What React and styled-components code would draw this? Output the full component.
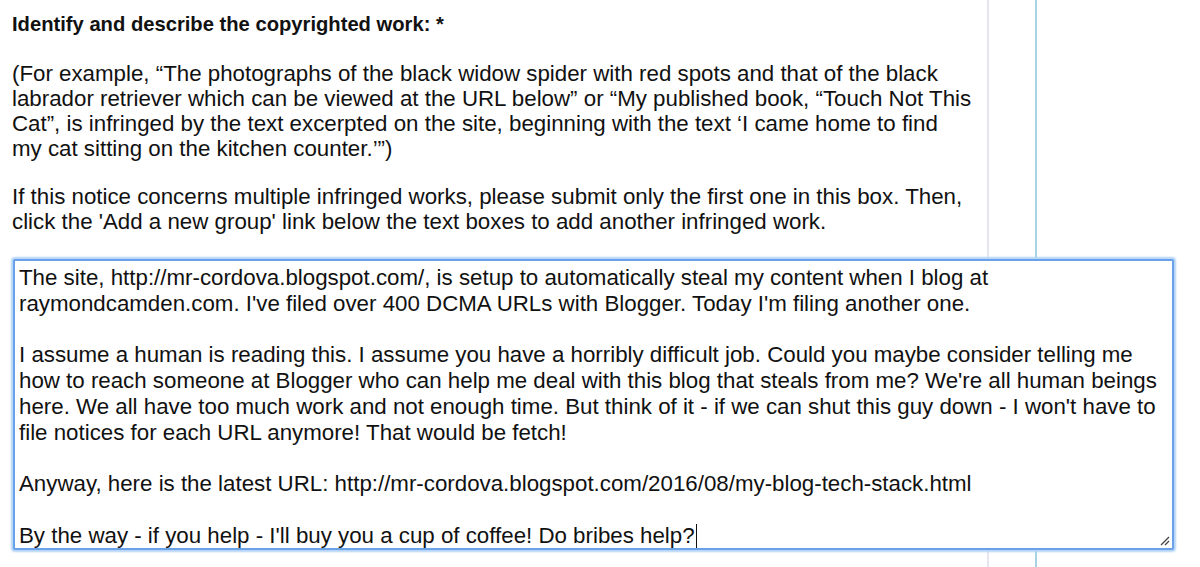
import React from "react";
import styled, { createGlobalStyle } from "styled-components";

const GlobalStyle = createGlobalStyle`
  html, body {
    margin: 0;
    padding: 0;
    background: #ffffff;
  }
  body {
    font-family: "Liberation Sans", Arial, Helvetica, sans-serif;
    color: #111111;
  }
`;

// the two faint column rules that run down behind the form
const Page = styled.div`
  width: 1200px;
  height: 567px;
  box-sizing: border-box;
  padding: 12px 0 0 12px;
  overflow: hidden;
  background-color: #ffffff;
  background-image: linear-gradient(#e6e6f1, #e6e6f1),
    linear-gradient(#a6d3e3, #a6d3e3);
  background-size: 2px 100%, 2px 100%;
  background-position: 987px 0, 1035px 0;
  background-repeat: no-repeat;
`;

const Label = styled.div`
  font-size: 20.2px;
  font-weight: 700;
  line-height: 25px;
  margin: 0 0 24px;
`;

const Hint = styled.p`
  font-size: 22.3px;
  line-height: 25px;
  margin: 0 0 ${(p) => p.$gap || 23}px;
  white-space: nowrap;
`;

const Field = styled.div`
  position: relative;
  width: 1161px;
  height: 291px;
  margin-left: 1px;
  box-sizing: border-box;
  background: #ffffff;
  border: 2px solid #6aa2ea;
  border-radius: 2px;
  box-shadow: 0 0 2px 2px #b4d3f6;
  padding: 4px 4px;
  font-size: 22.3px;
  line-height: 25.75px;
  white-space: pre;
  color: #111111;
  overflow: hidden;
`;

const Caret = styled.span`
  display: inline-block;
  width: 1px;
  height: 24px;
  margin-left: 1px;
  vertical-align: -5px;
  background: #111111;
`;

const Resizer = styled.svg`
  position: absolute;
  right: 2px;
  bottom: 2px;
  width: 12px;
  height: 12px;
`;

const bodyText = `The site, http://mr-cordova.blogspot.com/, is setup to automatically steal my content when I blog at
raymondcamden.com. I've filed over 400 DCMA URLs with Blogger. Today I'm filing another one.

I assume a human is reading this. I assume you have a horribly difficult job. Could you maybe consider telling me
how to reach someone at Blogger who can help me deal with this blog that steals from me? We're all human beings
here. We all have too much work and not enough time. But think of it - if we can shut this guy down - I won't have to
file notices for each URL anymore! That would be fetch!

Anyway, here is the latest URL: http://mr-cordova.blogspot.com/2016/08/my-blog-tech-stack.html

By the way - if you help - I'll buy you a cup of coffee! Do bribes help?`;

export default function App() {
  return (
    <>
      <GlobalStyle />
      <Page>
        <Label>Identify and describe the copyrighted work: *</Label>
        <Hint>
          (For example, “The photographs of the black widow spider with red
          spots and that of the black
          <br />
          labrador retriever which can be viewed at the URL below” or “My
          published book, “Touch Not This
          <br />
          Cat”, is infringed by the text excerpted on the site, beginning with
          the text ‘I came home to find
          <br />
          my cat sitting on the kitchen counter.’”)
        </Hint>
        <Hint $gap={25}>
          If this notice concerns multiple infringed works, please submit only
          the first one in this box. Then,
          <br />
          click the 'Add a new group' link below the text boxes to add another
          infringed work.
        </Hint>
        <Field>
          {bodyText}
          <Caret />
          <Resizer viewBox="0 0 12 12">
            <path d="M11 3 L3 11 M11 7 L7 11" stroke="#444" strokeWidth="1.3" fill="none" />
          </Resizer>
        </Field>
      </Page>
    </>
  );
}
